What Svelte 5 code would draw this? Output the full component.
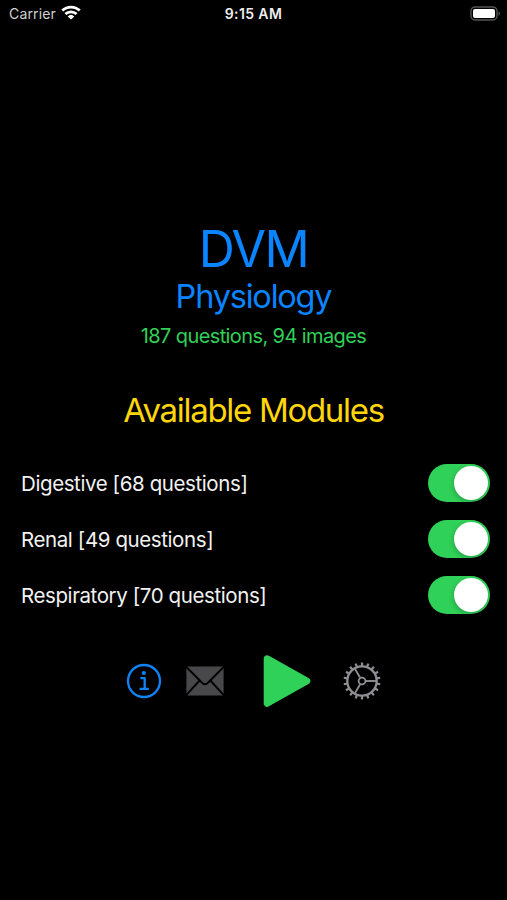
<script lang="ts">
	let modules = $state([
		{ name: 'Digestive', questions: 68, enabled: true },
		{ name: 'Renal', questions: 49, enabled: true },
		{ name: 'Respiratory', questions: 70, enabled: true }
	]);

	const imageCount = 94;
	const total = $derived(modules.reduce((sum, m) => sum + m.questions, 0));

	const teeth = Array.from({ length: 18 }, (_, i) => i * 20 + 10);
	const spokes = [0, 120, 240];
</script>

<div class="screen">
	<header class="status-bar">
		<div class="carrier">
			<span>Carrier</span>
			<svg width="20" height="15" viewBox="0 0 20 15" fill="none" stroke="#fff" stroke-width="2.8">
				<path d="M1.3 5.6a12.4 12.4 0 0 1 17.4 0" />
				<path d="M4.4 9.1a8 8 0 0 1 11.2 0" />
				<path d="M10 14.6 6.7 11.4a4.8 4.8 0 0 1 6.6 0Z" fill="#fff" stroke="none" />
			</svg>
		</div>
		<time class="clock">9:15 AM</time>
		<div class="battery">
			<svg width="31" height="15" viewBox="0 0 31 15">
				<rect x="1" y="1" width="26" height="13" rx="4" fill="#000" stroke="#555" stroke-width="1.4" />
				<rect x="3" y="3" width="22" height="9" rx="2" fill="#fff" />
				<path d="M28.5 5.2v4.6c2-.8 2-3.8 0-4.6Z" fill="#555" />
			</svg>
		</div>
	</header>

	<main>
		<h1>DVM</h1>
		<h2>Physiology</h2>
		<p class="summary">{total} questions, {imageCount} images</p>
		<h3>Available Modules</h3>

		<ul class="modules">
			{#each modules as module (module.name)}
				<li>
					<span>{module.name} [{module.questions} questions]</span>
					<button
						class="switch"
						class:on={module.enabled}
						role="switch"
						aria-checked={module.enabled}
						aria-label={module.name}
						onclick={() => (module.enabled = !module.enabled)}
					>
						<span class="knob"></span>
					</button>
				</li>
			{/each}
		</ul>

		<nav class="actions">
			<button class="info" aria-label="Information">
				<svg width="36" height="36" viewBox="0 0 36 36" fill="none" stroke="#0f84f8">
					<circle cx="18" cy="18" r="16" stroke-width="2.3" />
					<circle cx="17.8" cy="10" r="2.1" fill="#0f84f8" stroke="none" />
					<path d="M14.4 15.2h4.3v10.5M13.6 25.8h9.2" stroke-width="2.3" stroke-linejoin="round" />
				</svg>
			</button>
			<button class="mail" aria-label="Email">
				<svg width="38" height="30" viewBox="0 0 38 30">
					<rect x=".4" y=".6" width="37.2" height="29" rx="1.5" fill="#48484a" />
					<path
						d="M0 .6 16.3 17q2.7 2.5 5.4 0L38 .6M0 29.3 13.6 14.5M38 29.3 24.4 14.5"
						fill="none"
						stroke="#000"
						stroke-width="1.9"
					/>
				</svg>
			</button>
			<button class="play" aria-label="Start">
				<svg width="48" height="54" viewBox="0 0 48 54">
					<path
						d="M4.2 4.7 43.8 27 4.2 49.3Z"
						fill="#30d158"
						stroke="#30d158"
						stroke-width="7"
						stroke-linejoin="round"
					/>
				</svg>
			</button>
			<button class="settings" aria-label="Settings">
				<svg width="38" height="38" viewBox="-19 -19 38 38" fill="none" stroke="#8e8e93">
					<circle r="14.7" stroke-width="2.3" />
					<circle r="3.4" stroke-width="1.8" />
					{#each spokes as angle}
						<path d="M4 0h10" stroke-width="1.9" transform="rotate({angle})" />
					{/each}
					{#each teeth as angle}
						<path d="M15 0h3.5" stroke-width="2.2" transform="rotate({angle})" />
					{/each}
				</svg>
			</button>
		</nav>
	</main>
</div>

<style>
	:global(body) {
		background: #000;
	}

	.screen {
		width: 100%;
		height: 900px;
		display: flex;
		flex-direction: column;
		overflow: hidden;
		background: #000;
		color: #f2f2f2;
		font-family: Inter, 'Liberation Sans', sans-serif;
	}

	.status-bar {
		display: grid;
		grid-template-columns: 1fr auto 1fr;
		align-items: center;
		height: 27px;
		padding: 0 6px 0 9px;
		font-size: 14px;
	}

	.carrier {
		display: flex;
		align-items: center;
		gap: 5px;
		color: #d0d0d0;
		letter-spacing: 0.15px;
	}

	.carrier svg {
		margin-top: -2px;
	}

	.clock {
		margin-right: 3px;
		font-weight: 600;
		letter-spacing: 0.4px;
		color: #eee;
	}

	.battery {
		display: flex;
		justify-content: flex-end;
	}

	main {
		display: flex;
		flex-direction: column;
		padding-top: 192px;
		text-align: center;
	}

	h1,
	h2,
	h3,
	p,
	ul {
		margin: 0;
		padding: 0;
		font-weight: 400;
	}

	h1 {
		font-size: 50px;
		line-height: 60px;
		letter-spacing: -1.5px;
		color: #0a84ff;
	}

	h2 {
		margin-top: 1px;
		font-size: 32.5px;
		line-height: 34px;
		letter-spacing: -1.2px;
		color: #0a84ff;
	}

	.summary {
		margin-top: 7px;
		font-size: 20px;
		line-height: 30px;
		letter-spacing: -0.6px;
		color: #30d158;
	}

	h3 {
		margin-top: 39px;
		font-size: 33px;
		line-height: 40px;
		letter-spacing: -1.3px;
		color: #ffd60a;
	}

	.modules {
		display: flex;
		flex-direction: column;
		gap: 18px;
		margin-top: 34px;
		padding: 0 17px 0 21px;
		list-style: none;
	}

	li {
		display: flex;
		align-items: center;
		justify-content: space-between;
		height: 38.2px;
		font-size: 20.5px;
		letter-spacing: -0.4px;
	}

	button {
		display: flex;
		padding: 0;
		border: 0;
		background: none;
		cursor: pointer;
	}

	.switch {
		width: 62px;
		height: 38px;
		padding: 2px;
		border-radius: 19px;
		background: #39393d;
	}

	.switch.on {
		justify-content: flex-end;
		background: #30d158;
	}

	.knob {
		width: 34px;
		height: 34px;
		border-radius: 50%;
		background: #fff;
		box-shadow: -1px 2px 5px rgba(0, 0, 0, 0.2);
	}

	.actions {
		display: flex;
		align-items: center;
		justify-content: center;
		margin-top: 39px;
	}

	.mail {
		margin-left: 24px;
	}

	.play {
		margin-left: 39px;
	}

	.settings {
		margin-left: 32px;
	}
</style>
